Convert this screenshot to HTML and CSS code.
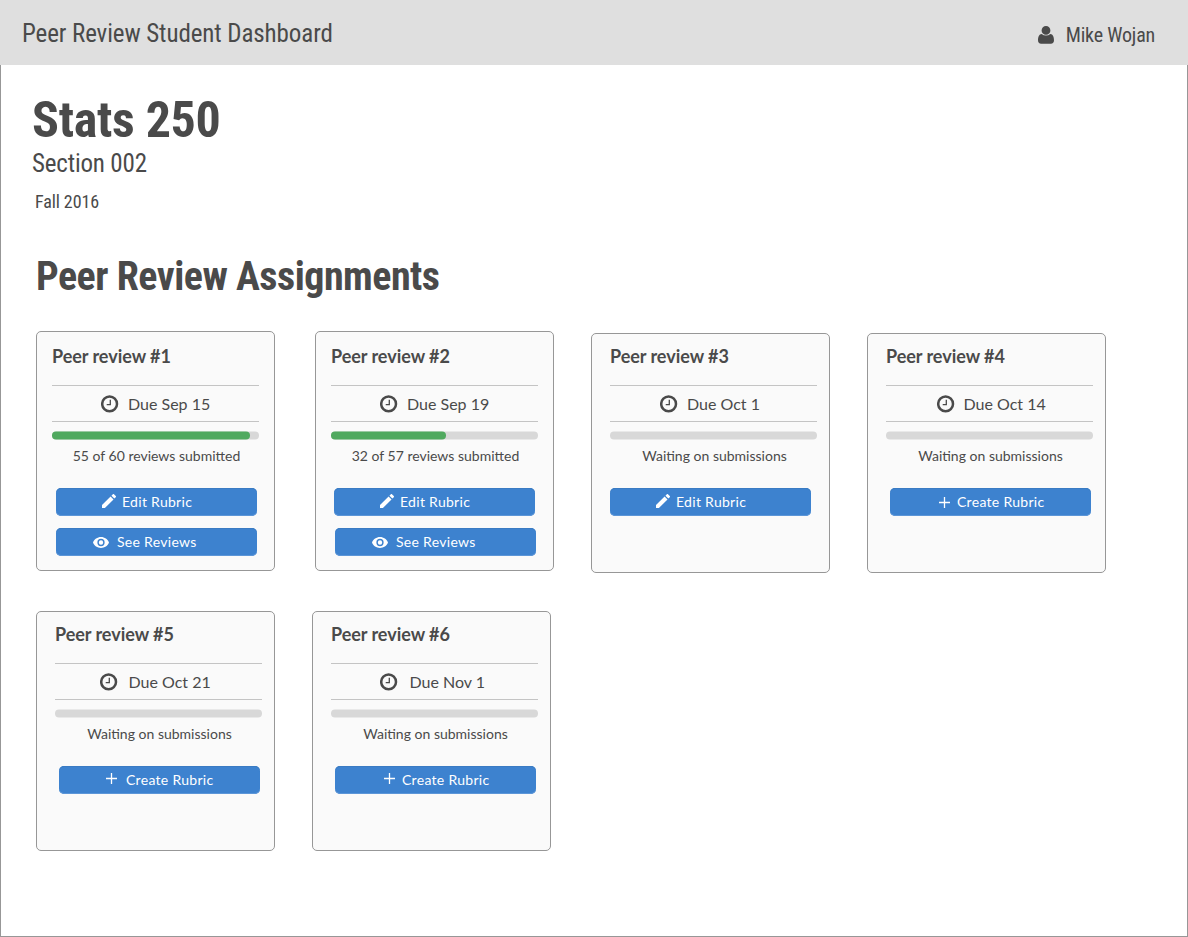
FILE: index.html
```html
<!DOCTYPE html>
<html lang="en">
<head>
<meta charset="utf-8">
<title>Peer Review Student Dashboard</title>
<link rel="stylesheet" href="styles.css">
</head>
<body>
<svg class="sprite" aria-hidden="true">
  <symbol id="user" viewBox="0 0 16 18"><path d="M8 0a4.4 4.4 0 0 1 0 8.8A4.4 4.4 0 0 1 8 0zM3.7 7.9a6.3 6.3 0 0 0 8.6 0C15 8 16 11 16 14.300C16 16.500 14.800 17.700 12.900 17.700H3.100C1.200 17.700 0 16.500 0 14.300C0 11 1 8 3.700 7.900z"/></symbol>
  <symbol id="clock" viewBox="0 0 18 18"><circle cx="8.600" cy="8.900" r="7.400" fill="none" stroke="currentColor" stroke-width="2.500"/><path d="M9.300 4.700V9.700H5.700" fill="none" stroke="currentColor" stroke-width="1.300"/></symbol>
  <symbol id="pencil" viewBox="3 3 18 18"><path d="M3 17.250V21h3.750L17.810 9.940l-3.750-3.750L3 17.250zM20.710 7.040a1 1 0 0 0 0-1.410l-2.340-2.340a1 1 0 0 0-1.410 0l-1.830 1.830 3.750 3.750 1.830-1.830z"/></symbol>
  <symbol id="eye" viewBox="1 4.500 22 15"><path d="M12 4.500C7 4.500 2.730 7.610 1 12c1.730 4.390 6 7.500 11 7.500s9.270-3.110 11-7.500c-1.730-4.390-6-7.500-11-7.500zM12 17a5 5 0 1 1 0-10 5 5 0 0 1 0 10zm0-8a3 3 0 1 0 0 6 3 3 0 0 0 0-6z"/></symbol>
  <symbol id="plus" viewBox="0 0 11 11"><path d="M5.500 0V11M0 5.500H11" stroke="currentColor" stroke-width="1.300"/></symbol>
</svg>
<header class="topbar">
  <div class="brand">Peer Review Student Dashboard</div>
  <div class="account"><svg class="user-icon"><use href="#user"/></svg><span>Mike Wojan</span></div>
</header>
<main class="frame">
  <h1 class="course">Stats 250</h1>
  <div class="section">Section 002</div>
  <div class="term">Fall 2016</div>
  <h2 class="heading">Peer Review Assignments</h2>
  <div class="row">
    <article class="card active first">
      <h3>Peer review #1</h3>
      <div class="due"><svg class="clock"><use href="#clock"/></svg><span>Due Sep 15</span></div>
      <div class="track"><div class="fill" style="width:198px"></div></div>
      <p class="status">55 of 60 reviews submitted</p>
      <button class="btn edit"><svg class="pencil"><use href="#pencil"/></svg><span>Edit Rubric</span></button>
      <button class="btn see"><svg class="eye"><use href="#eye"/></svg><span>See Reviews</span></button>
    </article>
    <article class="card active second">
      <h3>Peer review #2</h3>
      <div class="due"><svg class="clock"><use href="#clock"/></svg><span>Due Sep 19</span></div>
      <div class="track"><div class="fill" style="width:115px"></div></div>
      <p class="status">32 of 57 reviews submitted</p>
      <button class="btn edit"><svg class="pencil"><use href="#pencil"/></svg><span>Edit Rubric</span></button>
      <button class="btn see"><svg class="eye"><use href="#eye"/></svg><span>See Reviews</span></button>
    </article>
    <article class="card third">
      <h3>Peer review #3</h3>
      <div class="due"><svg class="clock"><use href="#clock"/></svg><span>Due Oct 1</span></div>
      <div class="track"></div>
      <p class="status">Waiting on submissions</p>
      <button class="btn edit"><svg class="pencil"><use href="#pencil"/></svg><span>Edit Rubric</span></button>
    </article>
    <article class="card fourth">
      <h3>Peer review #4</h3>
      <div class="due"><svg class="clock"><use href="#clock"/></svg><span>Due Oct 14</span></div>
      <div class="track"></div>
      <p class="status">Waiting on submissions</p>
      <button class="btn create"><svg class="plus"><use href="#plus"/></svg><span>Create Rubric</span></button>
    </article>
  </div>
  <div class="row later">
    <article class="card fifth">
      <h3>Peer review #5</h3>
      <div class="due"><svg class="clock"><use href="#clock"/></svg><span>Due Oct 21</span></div>
      <div class="track"></div>
      <p class="status">Waiting on submissions</p>
      <button class="btn create"><svg class="plus"><use href="#plus"/></svg><span>Create Rubric</span></button>
    </article>
    <article class="card sixth">
      <h3>Peer review #6</h3>
      <div class="due"><svg class="clock"><use href="#clock"/></svg><span>Due Nov 1</span></div>
      <div class="track"></div>
      <p class="status">Waiting on submissions</p>
      <button class="btn create"><svg class="plus"><use href="#plus"/></svg><span>Create Rubric</span></button>
    </article>
  </div>
</main>
</body>
</html>
```
FILE: styles.css
```css
* { box-sizing: border-box; }
body { margin: 0; height: 937px; display: flex; flex-direction: column; background: #fff; color: #4a4a4a; font-family: Lato, sans-serif; overflow: hidden; }
h1, h2, h3, p { margin: 0; }
svg { display: block; flex: none; fill: currentColor; }
.sprite { display: none; }
.topbar { height: 65px; flex: none; background: #dfdfdf; display: flex; justify-content: space-between; padding: 0 33px 0 22px; }
.topbar, .course, .section, .term, .heading { font-family: "Roboto Condensed", Roboto, sans-serif; font-stretch: 75%; white-space: nowrap; }
.brand { font-size: 25px; line-height: 68px; letter-spacing: -.1px; }
.account { display: flex; align-items: center; gap: 12px; font-size: 20px; padding-top: 4px; letter-spacing: -.2px; }
.user-icon { width: 16px; height: 18px; }
.frame { flex: 1; border: solid #979797; border-width: 0 1px 1px; padding: 25px 0 0 35px; }
.course { font-size: 50px; line-height: 60px; font-weight: 700; margin-left: -4px; letter-spacing: -.3px; }
.section { font-size: 25px; line-height: 28px; margin-left: -4px; letter-spacing: -.18px; }
.term { font-size: 18px; line-height: 24px; margin: 12px 0 0 -1px; letter-spacing: -.1px; }
.heading { font-size: 40px; line-height: 50px; font-weight: 700; margin-top: 38px; letter-spacing: -.5px; }
.row { display: flex; align-items: flex-start; gap: 37px; margin-top: 29px; }
.later { margin-top: 38px; }
.card { width: 239px; height: 240px; border: 1px solid #979797; border-radius: 5px; background: #fafafa; padding: 9px 0 0 18px; }
.active { padding: 11px 0 0 15px; }
.second { margin-left: 3px; }
.third, .fourth { margin-top: 2px; }
.card h3 { font-size: 18px; line-height: 26px; font-weight: 700; letter-spacing: -.04px; }
.due { width: 207px; height: 37px; margin-top: 16px; border: solid #c4c4c4; border-width: 1px 0; display: flex; align-items: center; gap: 9.5px; padding-left: 48.5px; font-size: 16px; line-height: 20px; }
.clock { width: 18px; height: 18px; }
.track { width: 207px; height: 8px; margin-top: 10px; border-radius: 4px; background: #d8d8d8; transform: translateY(-.5px); }
.fill { height: 8px; border-radius: 4px; background: #50a95f; }
.status { width: 209px; font-size: 14px; line-height: 20px; margin-top: 6px; text-align: center; }
.btn { display: flex; align-items: center; width: 201px; height: 28px; margin: 22px 0 0 4px; border: 0; border-radius: 5px; padding: 0 0 0 46px; background: #3d82cf; box-shadow: inset 0 1px #3a7bc3, inset 0 -1px #5c96d8; color: #fff; font: 14px/20px Lato, sans-serif; letter-spacing: .3px; gap: 6px; }
.btn + .btn { margin-top: 12px; }
.pencil { width: 14px; height: 14px; margin-bottom: 2px; }
.eye { width: 16px; height: 11px; }
.plus { width: 11px; height: 11px; }
.see { padding-left: 37px; gap: 8px; }
.create { padding-left: 49px; }
.second .edit { margin-left: 3px; }
.third .edit { margin-left: 0; }
.third .due { padding-left: 49.5px; gap: 9.5px; }
.fourth .due { padding-left: 50.5px; gap: 9px; }
.fifth .due { padding-left: 44.5px; gap: 11px; }
.sixth .due { gap: 12px; }
.fifth .create { padding-left: 46.5px; gap: 9.5px; }
.sixth .create { padding-left: 48.5px; gap: 7.5px; }
.fourth .create { gap: 7px; }
.later .plus { margin-bottom: 3px; }
```
